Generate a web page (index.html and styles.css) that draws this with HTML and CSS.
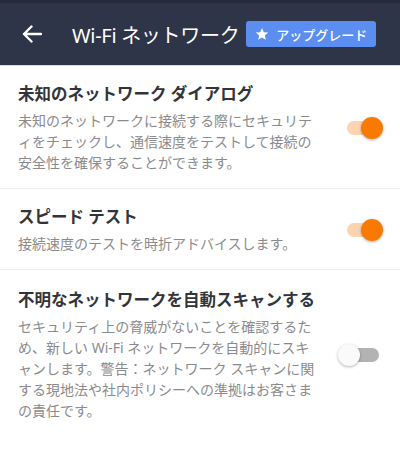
FILE: index.html
```html
<!DOCTYPE html>
<html lang="ja">
<head>
  <meta charset="UTF-8">
  <title>Wi-Fi ネットワーク</title>
  <link rel="stylesheet" href="styles.css">
</head>
<body>
  <div class="status-bar"></div>
  <header class="app-bar">
    <svg class="back" width="20" height="18" viewBox="0 0 20 18">
      <path d="M19 9H2M9.5 1.5L2 9l7.5 7.5" fill="none" stroke="#fff" stroke-width="2.4" stroke-linecap="round" stroke-linejoin="round"/>
    </svg>
    <h1 class="title">Wi-Fi ネットワーク</h1>
    <button class="upgrade">
      <svg width="14" height="14" viewBox="0 0 24 24"><path d="M12 1.8l3.1 7 7.5.6-5.7 5 1.7 7.4L12 17.9l-6.6 3.9 1.7-7.4-5.7-5 7.5-.6z" fill="#fff"/></svg>
      アップグレード
    </button>
  </header>

  <div class="setting">
    <div class="text">
      <div class="name">未知のネットワーク ダイアログ</div>
      <div class="desc">未知のネットワークに接続する際にセキュリティをチェックし、通信速度をテストして接続の安全性を確保することができます。</div>
    </div>
    <div class="switch on"><span class="track"></span><span class="thumb"></span></div>
  </div>

  <div class="setting">
    <div class="text">
      <div class="name">スピード テスト</div>
      <div class="desc">接続速度のテストを時折アドバイスします。</div>
    </div>
    <div class="switch on"><span class="track"></span><span class="thumb"></span></div>
  </div>

  <div class="setting last">
    <div class="text">
      <div class="name">不明なネットワークを自動スキャンする</div>
      <div class="desc">セキュリティ上の脅威がないことを確認するため、新しい Wi-Fi ネットワークを自動的にスキャンします。警告：ネットワーク スキャンに関する現地法や社内ポリシーへの準拠はお客さまの責任です。</div>
    </div>
    <div class="switch"><span class="track"></span><span class="thumb"></span></div>
  </div>
</body>
</html>
```

FILE: styles.css
```css
body { margin: 0; background: #fff; font-family: "Noto Sans", "Noto Sans CJK JP", sans-serif; }
.status-bar { height: 3px; background: #242a3a; }
.app-bar { height: 62px; background: #2e3549; border-bottom: 1px solid #dcdcdc; display: flex; align-items: center; padding: 0 0 0 22px; }
.back { flex: none; }
.title { margin: 0 0 0 30px; font-size: 20px; font-weight: 400; color: #fff; white-space: nowrap; letter-spacing: -0.3px; }
.upgrade { margin-left: 7px; height: 26px; width: 130px; flex: none; border: 0; border-radius: 3px; background: #5b8ef0; color: #fff; font-family: inherit; font-size: 13px; font-weight: 500; display: flex; align-items: center; gap: 7px; padding: 0 0 0 9px; white-space: nowrap; }
.setting { display: flex; align-items: center; padding: 17px 17px 15px 18px; border-bottom: 1px solid #eeeeee; }
.setting.last { border-bottom: 0; padding-top: 19px; }
.text { flex: 1; padding-right: 29px; line-break: loose; }
.name { font-size: 16.5px; font-weight: 700; color: #333438; line-height: 22px; margin-bottom: 5px; white-space: nowrap; }
.desc { font-size: 14px; line-height: 21px; color: #8b8b8e; }
.switch { position: relative; flex: none; width: 36px; height: 22px; }
.track { position: absolute; left: 0; top: 4px; width: 32px; height: 14px; border-radius: 7px; background: #b3b3b3; }
.thumb { position: absolute; left: -9px; top: 0; width: 22px; height: 22px; border-radius: 50%; background: #fafafa; box-shadow: 0 1px 3px rgba(0,0,0,0.3); }
.switch.on .track { background: #fcd4b0; }
.switch.on .thumb { left: 14px; background: #f97a00; }
```
